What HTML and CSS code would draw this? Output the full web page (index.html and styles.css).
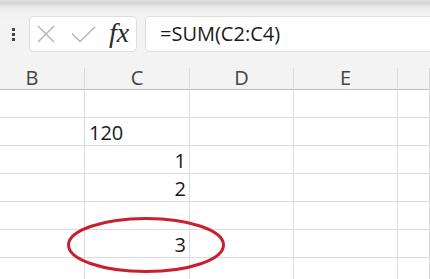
FILE: index.html
```html
<!DOCTYPE html>
<html>
<head>
<meta charset="utf-8">
<link rel="stylesheet" href="styles.css">
</head>
<body>
<div class="toolbar">
  <div class="grip"><span></span><span></span><span></span></div>
  <div class="iconbox">
    <svg class="ic-x" width="18" height="18" viewBox="0 0 18 18"><path d="M1 1 L17 17 M17 1 L1 17" stroke="#b3b3b3" stroke-width="1.4" fill="none"/></svg>
    <svg class="ic-check" width="25" height="17" viewBox="0 0 25 17"><path d="M1 7.5 L9 15.5 L24 1" stroke="#b3b3b3" stroke-width="1.4" fill="none"/></svg>
    <span class="fx">fx</span>
  </div>
  <div class="formula">=SUM(C2:C4)</div>
</div>
<div class="sheet">
  <div class="row head">
    <div class="cell">B</div><div class="cell">C</div><div class="cell">D</div><div class="cell">E</div><div class="cell"></div>
  </div>
  <div class="row"><div class="cell"></div><div class="cell"></div><div class="cell"></div><div class="cell"></div><div class="cell"></div></div>
  <div class="row"><div class="cell"></div><div class="cell">120</div><div class="cell"></div><div class="cell"></div><div class="cell"></div></div>
  <div class="row"><div class="cell"></div><div class="cell num">1</div><div class="cell"></div><div class="cell"></div><div class="cell"></div></div>
  <div class="row"><div class="cell"></div><div class="cell num">2</div><div class="cell"></div><div class="cell"></div><div class="cell"></div></div>
  <div class="row"><div class="cell"></div><div class="cell"></div><div class="cell"></div><div class="cell"></div><div class="cell"></div></div>
  <div class="row"><div class="cell"></div><div class="cell num">3</div><div class="cell"></div><div class="cell"></div><div class="cell"></div></div>
  <div class="row"><div class="cell"></div><div class="cell"></div><div class="cell"></div><div class="cell"></div><div class="cell"></div></div>
  <svg class="circle" width="162" height="60" viewBox="0 0 162 60"><ellipse cx="80" cy="29" rx="77.5" ry="26.5" fill="none" stroke="#c9202e" stroke-width="3"/></svg>
</div>
</body>
</html>
```
FILE: styles.css
```css
* { box-sizing: border-box; }
html, body { margin: 0; padding: 0; }
body {
  width: 430px;
  height: 279px;
  overflow: hidden;
  background: #fff;
  font-family: "Open Sans", "Noto Sans", sans-serif;
}
.toolbar {
  height: 68px;
  display: flex;
  align-items: flex-start;
  padding-top: 16px;
  background: linear-gradient(to bottom, #e4e4e4 0px, #d3d3d3 3px, #eaeaea 7px, #f1f1f1 14px, #f3f3f3 20px);
  overflow: hidden;
}
.grip {
  width: 29px;
  height: 36px;
  display: flex;
  flex-direction: column;
  align-items: center;
  justify-content: center;
  gap: 2px;
  padding-right: 3px;
}
.grip span {
  width: 3px;
  height: 3px;
  background: #444;
}
.iconbox {
  width: 108px;
  height: 36px;
  background: #fff;
  border: 1px solid #dedede;
  border-radius: 5px;
  display: flex;
  align-items: center;
  padding-left: 7px;
}
.ic-check { margin-left: 16px; margin-top: 1px; }
.fx {
  margin-left: 13px;
  font-family: "Liberation Serif", serif;
  font-style: italic;
  font-size: 28px;
  line-height: 30px;
  color: #2a2a2a;
  margin-top: -2px;
}
.formula {
  flex: 1;
  margin-left: 8px;
  margin-right: -12px;
  height: 36px;
  background: #fff;
  border: 1px solid #dedede;
  border-radius: 5px;
  padding-left: 14px;
  font-size: 20px;
  line-height: 33px;
  color: #1a1a1a;
}
.sheet {
  position: relative;
  margin-left: -20px;
  width: 450px;
}
.row {
  display: grid;
  grid-template-columns: 105px 105px 104px 104px 1fr;
  height: 28px;
  border-bottom: 1px solid #dcdcdc;
}
.cell {
  border-right: 1px solid #dcdcdc;
  display: flex;
  align-items: flex-end;
  padding: 0 3px 2px 4px;
  font-size: 20px;
  line-height: 20px;
  color: #1a1a1a;
  white-space: nowrap;
}
.cell.num { justify-content: flex-end; }
.row.head {
  height: 22px;
  background: #f3f3f3;
  border-bottom: 1px solid #bdbdbd;
}
.row.head .cell {
  justify-content: center;
  color: #444;
  padding: 0 0 3px 0;
  border-right-color: #d9d9d9;
}
.circle {
  position: absolute;
  left: 86px;
  top: 148px;
}
```
